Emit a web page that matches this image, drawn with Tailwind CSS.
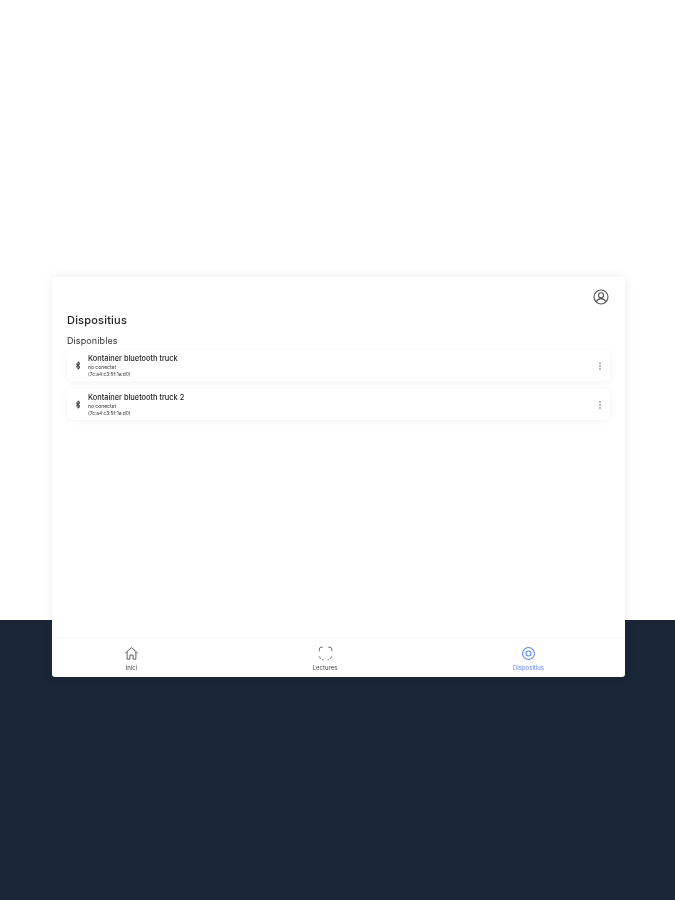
<!DOCTYPE html>
<html lang="ca">
<head>
<meta charset="utf-8">
<script src="https://cdn.jsdelivr.net/npm/@tailwindcss/browser@4"></script>
<title>Dispositius</title>
</head>
<body class="bg-white font-['Inter',sans-serif]">
<div class="relative w-[675px] h-[900px] overflow-hidden">
  <div class="h-[620px] bg-white"></div>
  <div class="h-[280px] bg-[#1a2636]"></div>
  <div class="absolute left-[52px] top-[277px] w-[573px] h-[400px] bg-white rounded-[3px] shadow-[0_0_12px_rgba(0,0,0,0.08)] flex flex-col [filter:blur(0.55px)]">
    <div class="flex justify-end pt-[12px] pr-[16px]">
      <svg class="w-[16px] h-[16px] text-[#555]" viewBox="0 0 24 24" fill="none" stroke="currentColor" stroke-width="1.700"><circle cx="12" cy="12" r="10.500"/><circle cx="12" cy="9.500" r="3.800"/><path d="M5 19c1.500-3.200 4-4.600 7-4.600s5.500 1.400 7 4.600"/></svg>
    </div>
    <h1 class="ml-[15px] mt-[8px] text-[11px] leading-[14px] font-medium text-[#222] tracking-[0.2px]">Dispositius</h1>
    <h2 class="ml-[15px] mt-[8px] text-[9px] leading-[12px] text-[#333] tracking-[0.1px]">Disponibles</h2>
    <div class="mx-[15px] mt-[3px] flex flex-col gap-[8px]">
      <div class="h-[31px] bg-white rounded-[5px] shadow-[0_1px_8px_rgba(0,0,0,0.05)] flex items-center pl-[7px] pr-[7px]">
        <svg class="w-[8px] h-[9px] text-[#222] shrink-0" viewBox="0 0 24 24" fill="none" stroke="currentColor" stroke-width="3"><path d="M6 6.500l12 11L12 23V1l6 5.500-12 11"/></svg>
        <div class="ml-[6px] flex-1 flex flex-col">
          <span class="text-[7.400px] leading-[9px] font-medium text-[#222]">Kontainer bluetooth truck</span>
          <span class="mt-[1px] text-[5px] leading-[7px] text-[#333]">no conectat</span>
          <span class="text-[4.800px] leading-[7px] text-[#333]">(7c:a4:c3:5f:1a:d0)</span>
        </div>
        <svg class="w-[6px] h-[10px] text-[#999]" viewBox="0 0 6 10" fill="currentColor"><circle cx="3" cy="2" r="0.900"/><circle cx="3" cy="5" r="0.900"/><circle cx="3" cy="8" r="0.900"/></svg>
      </div>
      <div class="h-[31px] bg-white rounded-[5px] shadow-[0_1px_8px_rgba(0,0,0,0.05)] flex items-center pl-[7px] pr-[7px]">
        <svg class="w-[8px] h-[9px] text-[#222] shrink-0" viewBox="0 0 24 24" fill="none" stroke="currentColor" stroke-width="3"><path d="M6 6.500l12 11L12 23V1l6 5.500-12 11"/></svg>
        <div class="ml-[6px] flex-1 flex flex-col">
          <span class="text-[7.400px] leading-[9px] font-medium text-[#222]">Kontainer bluetooth truck 2</span>
          <span class="mt-[1px] text-[5px] leading-[7px] text-[#333]">no conectat</span>
          <span class="text-[4.800px] leading-[7px] text-[#333]">(7c:a4:c3:5f:1a:d0)</span>
        </div>
        <svg class="w-[6px] h-[10px] text-[#999]" viewBox="0 0 6 10" fill="currentColor"><circle cx="3" cy="2" r="0.900"/><circle cx="3" cy="5" r="0.900"/><circle cx="3" cy="8" r="0.900"/></svg>
      </div>
    </div>
    <div class="mt-auto h-[40px] border-t border-[#f9f9f9] flex">
      <div class="w-[159px] flex flex-col items-center pt-[8px]">
        <svg class="w-[15px] h-[15px] text-[#555]" viewBox="0 0 24 24" fill="none" stroke="currentColor" stroke-width="1.500" stroke-linejoin="round"><path d="M2 11.500 12 2.500l10 9M5 9.500V21h4.500v-6.500h5V21H19V9.500"/></svg>
        <span class="mt-[3px] text-[6px] leading-[7px] text-[#444]">Inici</span>
      </div>
      <div class="w-[228px] flex flex-col items-center pt-[8px]">
        <svg class="w-[15px] h-[15px] text-[#666]" viewBox="0 0 24 24" fill="none" stroke="currentColor" stroke-width="1.500" stroke-linecap="round"><path d="M2 8V5a3 3 0 0 1 3-3h2M17 2h2a3 3 0 0 1 3 3v3M22 17l-2 3M4 20l-2-3M8 22H7M17 22h-1"/></svg>
        <span class="mt-[3px] text-[6px] leading-[7px] text-[#444]">Lectures</span>
      </div>
      <div class="flex-1 pr-[7px] flex flex-col items-center pt-[8px]">
        <svg class="w-[15px] h-[15px] text-[#5b86f5]" viewBox="0 0 24 24" fill="none" stroke="currentColor" stroke-width="1.700"><circle cx="12" cy="12" r="9.500"/><circle cx="12" cy="12" r="4"/></svg>
        <span class="mt-[3px] text-[6px] leading-[7px] text-[#5b86f5]">Dispositius</span>
      </div>
    </div>
  </div>
</div>
</body>
</html>
